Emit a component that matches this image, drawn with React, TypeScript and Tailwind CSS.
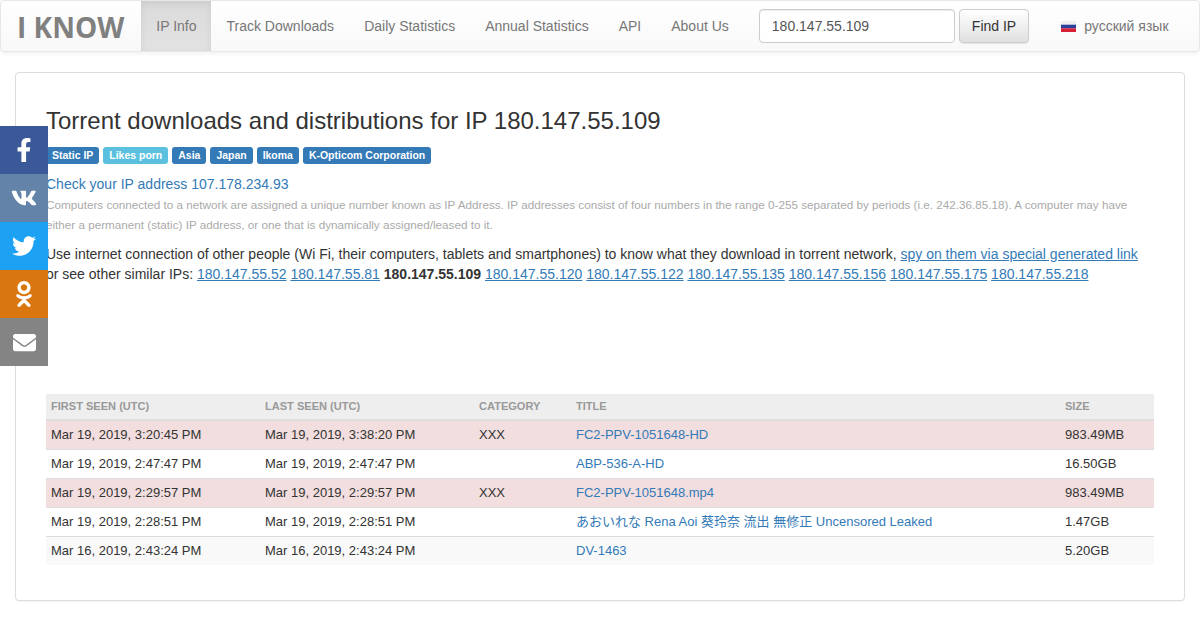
import React from "react";
import { FaEnvelope, FaFacebookF, FaOdnoklassniki, FaTwitter, FaVk } from "react-icons/fa";

const navLinks = ["Track Downloads", "Daily Statistics", "Annual Statistics", "API", "About Us"];

const labels = [
  { text: "Static IP", color: "bg-[#337ab7]" },
  { text: "Likes porn", color: "bg-[#5bc0de]" },
  { text: "Asia", color: "bg-[#337ab7]" },
  { text: "Japan", color: "bg-[#337ab7]" },
  { text: "Ikoma", color: "bg-[#337ab7]" },
  { text: "K-Opticom Corporation", color: "bg-[#337ab7]" },
];

const similarBefore = ["180.147.55.52", "180.147.55.81"];
const similarAfter = [
  "180.147.55.120",
  "180.147.55.122",
  "180.147.55.135",
  "180.147.55.156",
  "180.147.55.175",
  "180.147.55.218",
];

const rows = [
  { first: "Mar 19, 2019, 3:20:45 PM", last: "Mar 19, 2019, 3:38:20 PM", category: "XXX", title: "FC2-PPV-1051648-HD", size: "983.49MB", rowClass: "bg-[#f2dede]" },
  { first: "Mar 19, 2019, 2:47:47 PM", last: "Mar 19, 2019, 2:47:47 PM", category: "", title: "ABP-536-A-HD", size: "16.50GB", rowClass: "bg-white" },
  { first: "Mar 19, 2019, 2:29:57 PM", last: "Mar 19, 2019, 2:29:57 PM", category: "XXX", title: "FC2-PPV-1051648.mp4", size: "983.49MB", rowClass: "bg-[#f2dede]" },
  { first: "Mar 19, 2019, 2:28:51 PM", last: "Mar 19, 2019, 2:28:51 PM", category: "", title: "あおいれな Rena Aoi 葵玲奈 流出 無修正 Uncensored Leaked", size: "1.47GB", rowClass: "bg-white" },
  { first: "Mar 16, 2019, 2:43:24 PM", last: "Mar 16, 2019, 2:43:24 PM", category: "", title: "DV-1463", size: "5.20GB", rowClass: "bg-[#f9f9f9]" },
];

const shareButtons = [
  { icon: <FaFacebookF size={24} />, color: "bg-[#3b5998]" },
  { icon: <FaVk size={26} />, color: "bg-[#6383a8]" },
  { icon: <FaTwitter size={24} />, color: "bg-[#1da1f2]" },
  { icon: <FaOdnoklassniki size={26} />, color: "bg-[#d9760f]" },
  { icon: <FaEnvelope size={23} />, color: "bg-[#848484]" },
];

const Navbar: React.FC = () => (
  <nav className="flex h-[52px] items-stretch rounded border border-[#e7e7e7] bg-gradient-to-b from-white to-[#f8f8f8] shadow-[0_1px_5px_rgba(0,0,0,0.075)]">
    <a className="ml-[16px] mr-[17px] flex items-center pt-[2px] font-['Open_Sans',sans-serif] text-[28px] font-bold leading-none text-[#808080]">
      I KNOW
    </a>
    <a className="flex items-center bg-gradient-to-b from-[#dbdbdb] to-[#e2e2e2] px-[15px] text-[#777] shadow-[inset_0_3px_9px_rgba(0,0,0,0.075)]">
      IP Info
    </a>
    {navLinks.map((link) => (
      <a key={link} className="flex items-center px-[15px] text-[#777]">
        {link}
      </a>
    ))}
    <form className="ml-[15px] flex items-center gap-1">
      <input
        readOnly
        value="180.147.55.109"
        className="h-[34px] w-[196px] rounded border border-[#ccc] bg-white px-3 text-[#555] shadow-[inset_0_1px_1px_rgba(0,0,0,0.075)]"
      />
      <button
        type="button"
        className="h-[34px] rounded border border-[#ccc] bg-gradient-to-b from-white to-[#e0e0e0] px-3 text-[#333] shadow-[0_1px_1px_rgba(0,0,0,0.08)]"
      >
        Find IP
      </button>
    </form>
    <a className="ml-[32px] flex items-center text-[#777]">
      <svg width="15" height="11" viewBox="0 0 15 11" className="mr-[8px]">
        <rect width="15" height="11" fill="#eee" />
        <rect y="3.7" width="15" height="3.6" fill="#2a3f9b" />
        <rect y="7.3" width="15" height="3.7" fill="#d6203a" />
      </svg>
      русский язык
    </a>
  </nav>
);

const TorrentTable: React.FC = () => (
  <table className="mt-[110px] w-full table-fixed border-collapse text-[13px] text-[#333]">
    <colgroup>
      <col className="w-[214px]" />
      <col className="w-[214px]" />
      <col className="w-[97px]" />
      <col className="w-[489px]" />
      <col />
    </colgroup>
    <thead>
      <tr className="h-[26px] border-b-2 border-[#ddd] bg-[#eee] text-left text-[11.05px] font-bold uppercase text-[#999]">
        <th className="px-[5px] pb-[2px] font-bold">First seen (UTC)</th>
        <th className="px-[5px] pb-[2px] font-bold">Last seen (UTC)</th>
        <th className="px-[5px] pb-[2px] font-bold">Category</th>
        <th className="px-[5px] pb-[2px] font-bold">Title</th>
        <th className="px-[5px] pb-[2px] font-bold">Size</th>
      </tr>
    </thead>
    <tbody>
      {rows.map((row) => (
        <tr key={row.first + row.title} className={`h-[29px] border-t border-[#ddd] first:border-t-0 ${row.rowClass}`}>
          <td className="px-[5px]">{row.first}</td>
          <td className="px-[5px]">{row.last}</td>
          <td className="px-[5px]">{row.category}</td>
          <td className="px-[5px]">
            <a className="text-[#337ab7]">{row.title}</a>
          </td>
          <td className="px-[5px]">{row.size}</td>
        </tr>
      ))}
    </tbody>
  </table>
);

const App: React.FC = () => (
  <div className="relative min-h-[630px] bg-white font-['Liberation_Sans','Noto_Sans_CJK_JP',sans-serif] text-sm leading-5 text-[#333]">
    <Navbar />

    {/* Share buttons sit over the card */}
    <div className="absolute left-0 top-[126px] z-10 flex w-12 flex-col">
      {shareButtons.map((button, i) => (
        <a key={i} className={`flex h-12 items-center justify-center text-white ${button.color}`}>
          {button.icon}
        </a>
      ))}
    </div>

    <main className="mx-[15px] mt-5 h-[529px] rounded border border-[#ddd] bg-white px-[30px] pb-[35px] pt-[33px] shadow-[0_1px_1px_rgba(0,0,0,0.05)]">
      <h1 className="text-2xl font-normal leading-[30px]">Torrent downloads and distributions for IP 180.147.55.109</h1>
      <div className="mt-[11px] flex gap-1">
        {labels.map((label) => (
          <span
            key={label.text}
            className={`rounded-[3px] px-[6px] pb-[2px] pt-[3px] text-[10.47px] font-bold leading-[12px] text-white ${label.color}`}
          >
            {label.text}
          </span>
        ))}
      </div>
      <a className="mt-[10px] block text-[#337ab7]">Check your IP address 107.178.234.93</a>
      <p className="pt-[1px] text-[11.7px] text-[#aaa]">
        Computers connected to a network are assigned a unique number known as IP Address. IP addresses consist of four numbers in the range 0-255 separated by periods (i.e. 242.36.85.18). A computer may have either a permanent (static) IP address, or one that is dynamically assigned/leased to it.
      </p>
      <p className="mt-[9px]">
        Use internet connection of other people (Wi Fi, their computers, tablets and smartphones) to know what they download in torrent network,{" "}
        <a className="text-[#337ab7] underline">spy on them via special generated link</a>
        <br />
        or see other similar IPs:{" "}
        {similarBefore.map((ip) => (
          <React.Fragment key={ip}>
            <a className="text-[#337ab7] underline">{ip}</a>{" "}
          </React.Fragment>
        ))}
        <b>180.147.55.109</b>{" "}
        {similarAfter.map((ip) => (
          <React.Fragment key={ip}>
            <a className="text-[#337ab7] underline">{ip}</a>{" "}
          </React.Fragment>
        ))}
      </p>
      <TorrentTable />
    </main>
  </div>
);

export default App;
